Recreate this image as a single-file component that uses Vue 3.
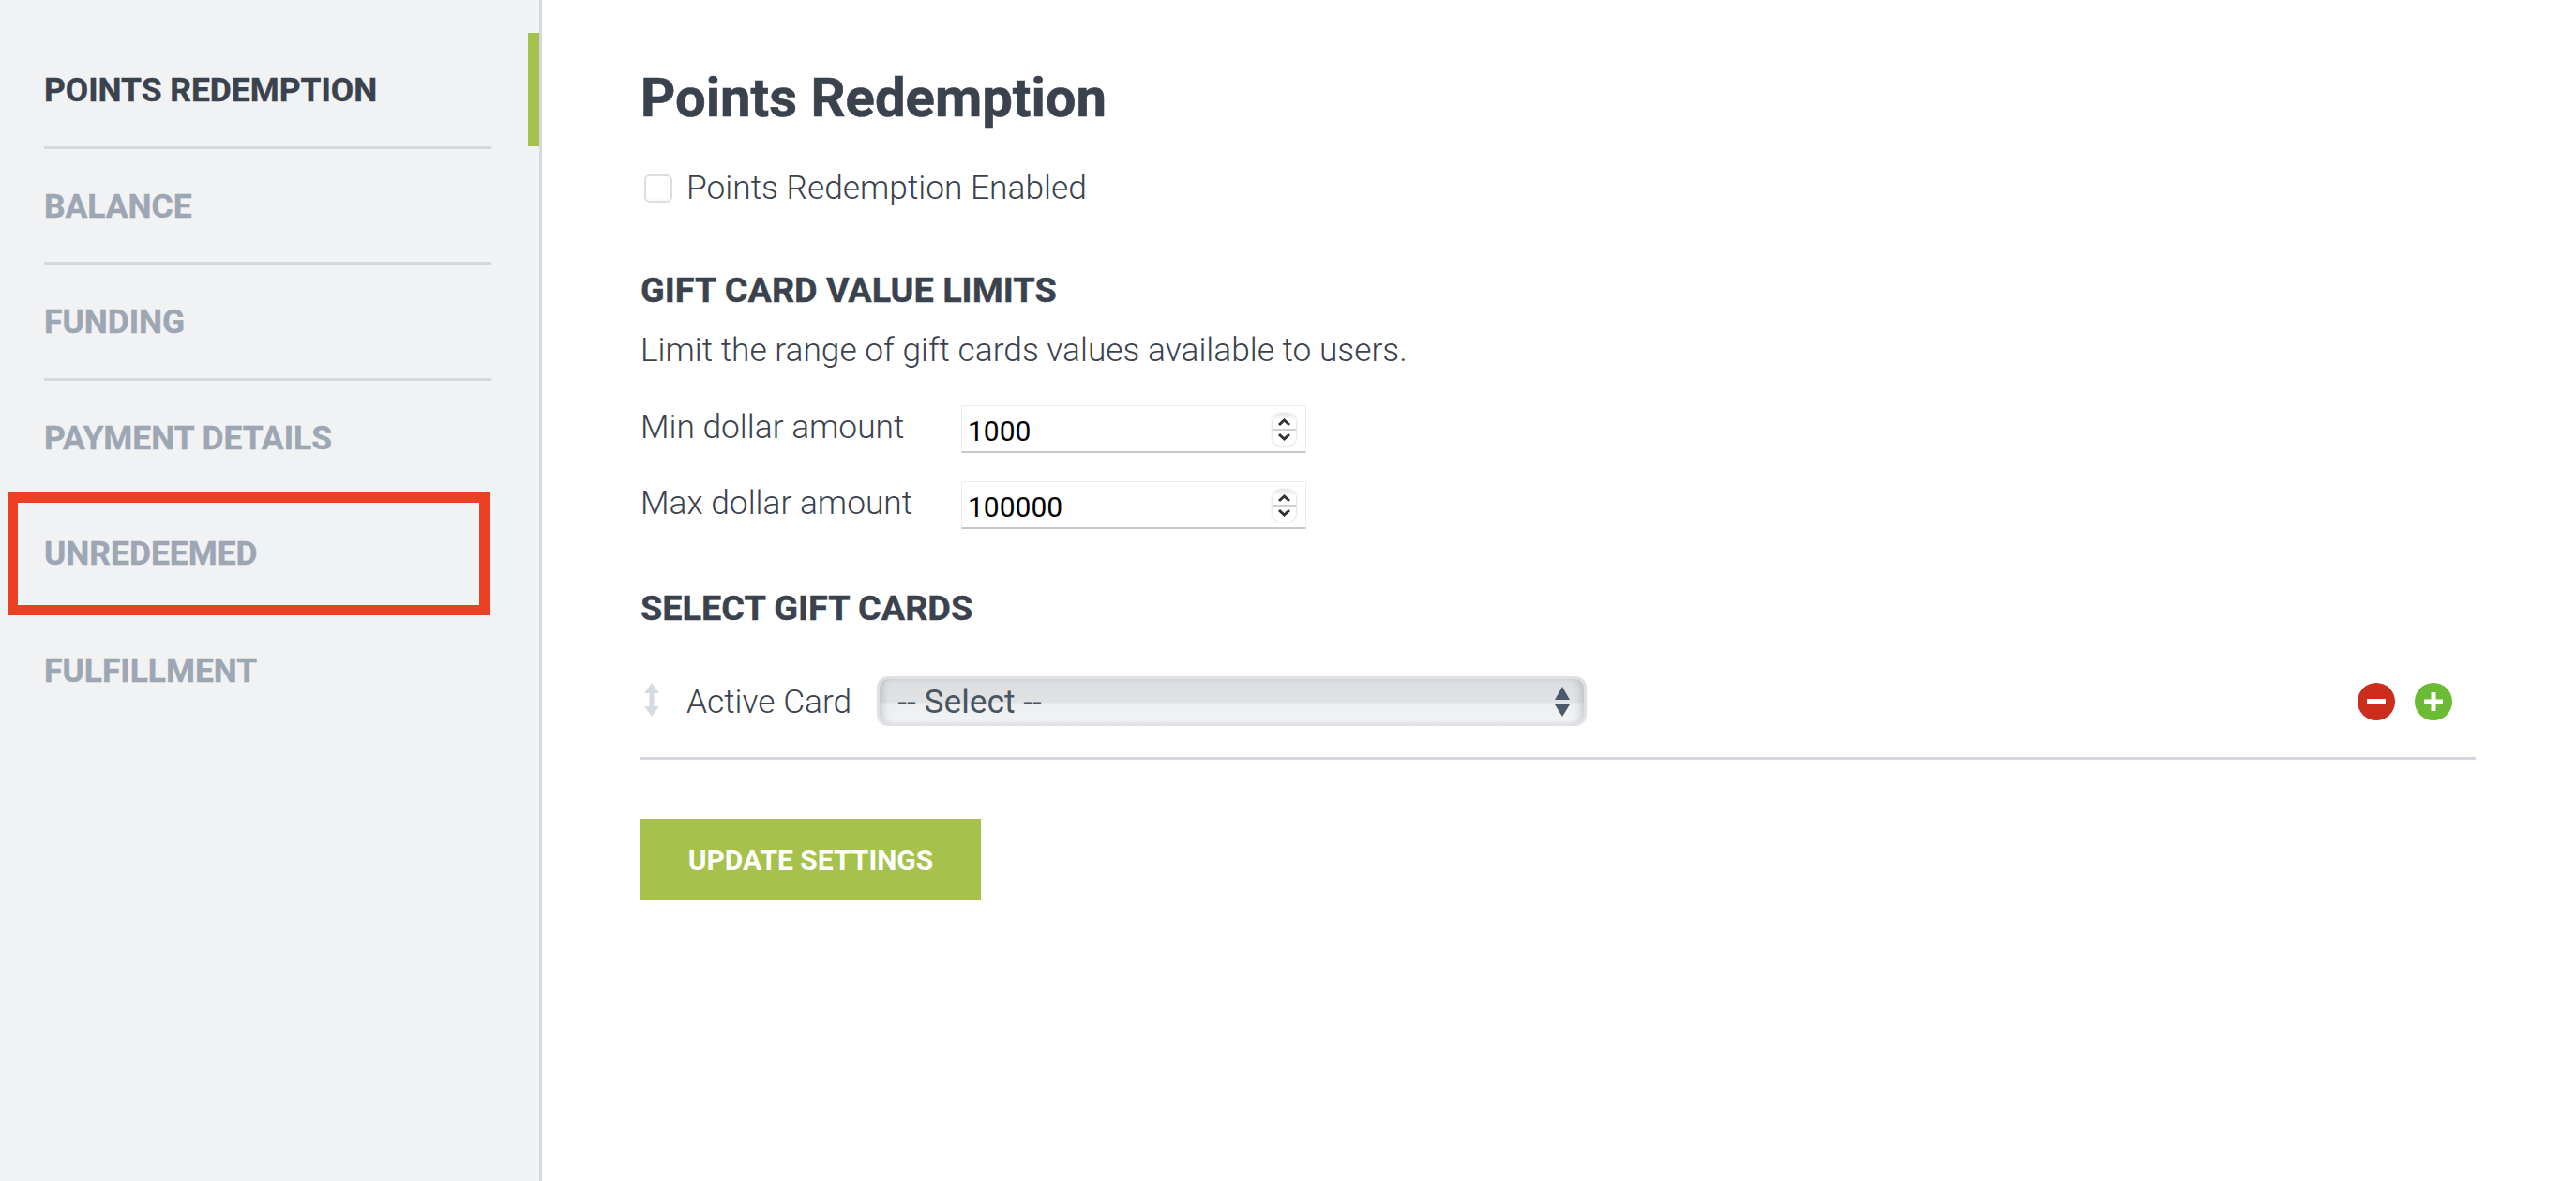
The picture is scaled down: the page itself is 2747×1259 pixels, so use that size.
<script setup>
const items = [
  { label: 'POINTS REDEMPTION', active: true },
  { label: 'BALANCE' },
  { label: 'FUNDING' },
  { label: 'PAYMENT DETAILS' },
  { label: 'UNREDEEMED' },
  { label: 'FULFILLMENT' }
]
const limits = [
  { label: 'Min dollar amount', value: '1000' },
  { label: 'Max dollar amount', value: '100000' }
]
</script>

<template>
  <div class="page">
    <aside class="sidebar">
      <nav class="nav">
        <a v-for="item in items" :key="item.label" class="nav-item" :class="{ active: item.active }">{{ item.label }}</a>
      </nav>
      <span class="active-bar"></span>
      <span class="callout"></span>
    </aside>
    <main class="main">
      <h1 class="title">Points Redemption</h1>
      <label class="check-row">
        <span class="checkbox"></span>
        <span>Points Redemption Enabled</span>
      </label>
      <h2 class="heading first">GIFT CARD VALUE LIMITS</h2>
      <p class="desc">Limit the range of gift cards values available to users.</p>
      <div class="limits">
        <div v-for="limit in limits" :key="limit.label" class="limit-row">
          <span class="limit-label">{{ limit.label }}</span>
          <div class="num-field">
            <input class="num-input" type="text" :value="limit.value" />
            <span class="spinner">
              <svg viewBox="0 0 25 34" width="25" height="34">
                <path d="M7 12 12.500 7l5.500 5M7 22l5.500 5 5.500-5" fill="none" stroke="#333" stroke-width="3"/>
              </svg>
            </span>
          </div>
        </div>
      </div>
      <h2 class="heading second">SELECT GIFT CARDS</h2>
      <div class="card-row">
        <svg class="drag" viewBox="0 0 16 36" width="16" height="36">
          <path d="M8 0 16 11H10.500V25H16L8 36 0 25H5.500V11H0Z" fill="#d6dae1"/>
        </svg>
        <span class="card-label">Active Card</span>
        <div class="select-box">
          <span>-- Select --</span>
          <svg class="select-arrows" viewBox="0 0 16 32" width="16" height="32">
            <path d="M8 0 16 14H0ZM0 19H16L8 32Z" fill="#4a5a6a"/>
          </svg>
        </div>
        <div class="actions">
          <svg viewBox="0 0 40 40" width="40" height="40">
            <circle cx="20" cy="20" r="20" fill="#cb2d1e"/>
            <rect x="10" y="17" width="20" height="6" rx="1" fill="#fff"/>
          </svg>
          <svg viewBox="0 0 40 40" width="40" height="40">
            <circle cx="20" cy="20" r="20" fill="#6cbb34"/>
            <path d="M17.500 10h5v7.500H30v5h-7.500V30h-5v-7.500H10v-5h7.500Z" fill="#fff"/>
          </svg>
        </div>
      </div>
      <button class="submit" type="button">UPDATE SETTINGS</button>
    </main>
  </div>
</template>

<style>
html, body { margin: 0; background: #fff; }
</style>

<style scoped>
.page {
  display: flex;
  min-height: 1259px;
  font-family: Roboto, "Liberation Sans", sans-serif;
  color: #3a424e;
}
.sidebar {
  position: relative;
  box-sizing: border-box;
  flex: 0 0 578px;
  padding: 35px 51px 0 47px;
  background: #f0f2f4;
  border-right: 3px solid #d5d9de;
}
.nav { display: flex; flex-direction: column; }
.nav-item {
  box-sizing: border-box;
  height: 123.500px;
  padding-top: 2px;
  display: flex;
  align-items: center;
  border-bottom: 3px solid #d5d9de;
  font-size: 35.400px;
  font-weight: 700;
  -webkit-text-stroke: 0.4px currentColor;
  color: #9da7b3;
}
.nav-item:last-child { border-bottom: 0; }
.nav-item.active { color: #3a424e; }
.active-bar {
  position: absolute;
  top: 35px;
  right: 0;
  width: 12px;
  height: 121px;
  background: #a6c24c;
}
.callout {
  position: absolute;
  left: 8px;
  top: 525px;
  box-sizing: border-box;
  width: 514px;
  height: 131px;
  border: 11px solid #ec4025;
}
.main {
  flex: 1;
  min-width: 0;
  padding: 0 107px 0 105px;
  display: flex;
  flex-direction: column;
  align-items: stretch;
}
.title {
  margin: 68px 0 0;
  font-size: 58px;
  line-height: 72px;
  font-weight: 700;
  -webkit-text-stroke: 0.6px currentColor;
}
.check-row {
  margin-top: 40px;
  display: flex;
  align-items: center;
  height: 40px;
  font-size: 35.300px;
  font-weight: 300;
}
.checkbox {
  box-sizing: border-box;
  width: 30px;
  height: 30px;
  margin: 2px 15px 0 4px;
  border: 2px solid #dddedf;
  border-radius: 6px;
  background: #fff;
  box-shadow: inset 0 -2px 2px rgba(0, 0, 0, 0.03);
}
.heading {
  margin: 0;
  font-size: 37.800px;
  line-height: 44px;
  font-weight: 700;
  -webkit-text-stroke: 0.4px currentColor;
}
.heading.first { margin-top: 67px; }
.heading.second { margin-top: 62px; }
.desc {
  margin: 20px 0 0;
  font-size: 35.300px;
  line-height: 44px;
  font-weight: 300;
}
.limits {
  margin-top: 37px;
  display: flex;
  flex-direction: column;
  gap: 30px;
}
.limit-row { display: flex; height: 51px; }
.limit-label {
  flex: 0 0 342px;
  font-size: 35.300px;
  font-weight: 300;
  line-height: 46px;
}
.num-field {
  position: relative;
  box-sizing: border-box;
  width: 368px;
  height: 51px;
  background: #fff;
  border: 1px solid #eeeeee;
  border-bottom: 2px solid #c8c8c8;
}
.num-input {
  box-sizing: border-box;
  width: 100%;
  height: 100%;
  padding: 4px 0 0 6px;
  border: 0;
  outline: 0;
  background: transparent;
  color: #000;
  font-family: inherit;
  font-size: 30px;
}
.spinner {
  position: absolute;
  top: 8px;
  right: 10px;
  width: 25px;
  height: 34px;
  display: block;
  border-radius: 9px;
  background: linear-gradient(#e6e6e6 0, #fff 20%, #fff 47%, #cfcfcf 47%, #cfcfcf 53%, #fff 53%, #fff 100%);
  box-shadow: 0 0 3px rgba(0, 0, 0, 0.25);
}
.spinner svg { display: block; }
.card-row {
  margin-top: 51px;
  padding-bottom: 33px;
  border-bottom: 3px solid #d5d9de;
  display: flex;
  align-items: center;
  height: 53px;
}
.drag { margin: -4px 0 0 4px; flex: none; }
.card-label {
  margin-left: 29px;
  font-size: 35.300px;
  font-weight: 300;
}
.select-box {
  box-sizing: border-box;
  margin-left: 27px;
  width: 757px;
  height: 53px;
  display: flex;
  align-items: center;
  justify-content: space-between;
  padding: 0 15px 0 19px;
  border: 3px solid #dfe1e5;
  border-radius: 12px;
  background: linear-gradient(#dcdee0 0, #e0e2e4 52%, #eceef0 56%, #f2f3f5 100%);
  box-shadow: inset 7px 0 6px -3px rgba(120, 125, 135, 0.28), inset -7px 0 6px -3px rgba(120, 125, 135, 0.28);
  font-size: 35.300px;
  color: #4a5562;
}
.actions {
  margin-left: auto;
  margin-right: 25px;
  display: flex;
  gap: 21px;
}
.actions svg { display: block; }
.submit {
  align-self: flex-start;
  margin-top: 63px;
  width: 363px;
  height: 86px;
  border: 0;
  padding: 0;
  background: #a6c24c;
  color: #fff;
  font-family: inherit;
  font-size: 30px;
  font-weight: 700;
}
</style>
